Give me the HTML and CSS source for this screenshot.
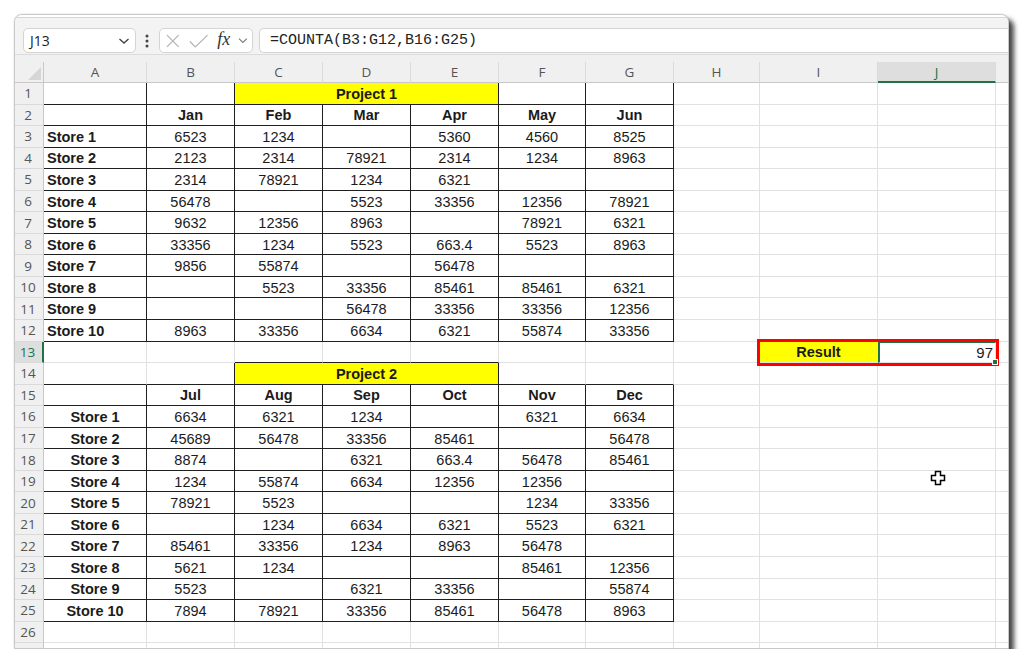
FILE: index.html
```html
<!DOCTYPE html>
<html lang="en">

<head>
  <meta charset="UTF-8">
  <title>Store Sales - COUNTA</title>
  <link rel="stylesheet" href="styles.css">
</head>

<body>
  <div class="page">
    <div class="window">
      <div class="top-strip"></div>

      <div class="formula-bar">
        <div class="name-box">
          <span>J13</span>
          <svg class="chev" width="12" height="8" viewBox="0 0 12 8">
            <path d="M1.5 2 L6 6 L10.5 2" fill="none" stroke="#444" stroke-width="1.4" />
          </svg>
        </div>
        <svg class="more" width="6" height="16" viewBox="0 0 6 16">
          <circle cx="3" cy="3" r="1.5" fill="#444" />
          <circle cx="3" cy="8" r="1.5" fill="#444" />
          <circle cx="3" cy="13" r="1.5" fill="#444" />
        </svg>
        <div class="fx-box">
          <svg width="16" height="16" viewBox="0 0 16 16">
            <path d="M2 2 L14 14 M14 2 L2 14" stroke="#b4b4b4" stroke-width="1.3" fill="none" />
          </svg>
          <svg width="20" height="16" viewBox="0 0 20 16">
            <path d="M1 8.5 L6.5 14 L19 2" stroke="#b4b4b4" stroke-width="1.3" fill="none" />
          </svg>
          <span class="fx">fx</span>
          <svg width="10" height="7" viewBox="0 0 10 7">
            <path d="M1 1.5 L5 5.5 L9 1.5" fill="none" stroke="#777" stroke-width="1.1" />
          </svg>
        </div>
        <div class="formula">=COUNTA(B3:G12,B16:G25)</div>
      </div>

      <div class="sheet-wrap">
        <div class="sheet" id="sheet"></div>
      </div>

      <svg class="cursor" width="16" height="16" viewBox="0 0 16 16">
        <path d="M5.5 1.5h5v4h4v5h-4v4h-5v-4h-4v-5h4z" fill="#fff" stroke="#000" stroke-width="1.5" />
      </svg>
    </div>
  </div>

  <script>
    var sheet = document.getElementById("sheet");
    var letters = ["A", "B", "C", "D", "E", "F", "G", "H", "I", "J"];

    var months1 = ["Jan", "Feb", "Mar", "Apr", "May", "Jun"];
    var months2 = ["Jul", "Aug", "Sep", "Oct", "Nov", "Dec"];

    var project1 = [
      ["Store 1", 6523, 1234, "", 5360, 4560, 8525],
      ["Store 2", 2123, 2314, 78921, 2314, 1234, 8963],
      ["Store 3", 2314, 78921, 1234, 6321, "", ""],
      ["Store 4", 56478, "", 5523, 33356, 12356, 78921],
      ["Store 5", 9632, 12356, 8963, "", 78921, 6321],
      ["Store 6", 33356, 1234, 5523, 663.4, 5523, 8963],
      ["Store 7", 9856, 55874, "", 56478, "", ""],
      ["Store 8", "", 5523, 33356, 85461, 85461, 6321],
      ["Store 9", "", "", 56478, 33356, 33356, 12356],
      ["Store 10", 8963, 33356, 6634, 6321, 55874, 33356]
    ];

    var project2 = [
      ["Store 1", 6634, 6321, 1234, "", 6321, 6634],
      ["Store 2", 45689, 56478, 33356, 85461, "", 56478],
      ["Store 3", 8874, "", 6321, 663.4, 56478, 85461],
      ["Store 4", 1234, 55874, 6634, 12356, 12356, ""],
      ["Store 5", 78921, 5523, "", "", 1234, 33356],
      ["Store 6", "", 1234, 6634, 6321, 5523, 6321],
      ["Store 7", 85461, 33356, 1234, 8963, 56478, ""],
      ["Store 8", 5621, 1234, "", "", 85461, 12356],
      ["Store 9", 5523, "", 6321, 33356, "", 55874],
      ["Store 10", 7894, 78921, 33356, 85461, 56478, 8963]
    ];

    function add(cls, text) {
      var d = document.createElement("div");
      d.className = cls;
      if (text !== undefined && text !== "") d.textContent = text;
      sheet.appendChild(d);
      return d;
    }

    function cell(cls, text) {
      return add("cell " + (cls || ""), text);
    }

    // empty H, I, J and the sliver after J
    function blankRight() {
      cell(); cell(); cell(); cell("edge");
    }

    // column headers
    add("corner");
    letters.forEach(function (l) {
      add("col-head" + (l === "J" ? " active" : ""), l);
    });
    add("col-head edge");

    for (var r = 1; r <= 27; r++) {
      add("row-head" + (r === 13 ? " active" : ""), r);

      if (r === 1 || r === 14) {
        var first = r === 1;
        cell(first ? "bd" : "bb");
        cell("bd");
        cell("bd yellow bold c span3", first ? "Project 1" : "Project 2");
        cell(first ? "bd" : "bb");
        cell(first ? "bd" : "bb");
        blankRight();
      } else if (r === 2 || r === 15) {
        cell("bd");
        (r === 2 ? months1 : months2).forEach(function (m) {
          cell("bd bold c", m);
        });
        blankRight();
      } else if ((r >= 3 && r <= 12) || (r >= 16 && r <= 25)) {
        var row = r <= 12 ? project1[r - 3] : project2[r - 16];
        cell("bd bold " + (r <= 12 ? "l" : "c"), row[0]);
        for (var i = 1; i < row.length; i++) {
          cell("bd c", row[i]);
        }
        blankRight();
      } else if (r === 13) {
        cell(); cell();
        cell("bb"); cell("bb"); cell("bb");
        cell(); cell(); cell();
        var result = add("result");
        var label = document.createElement("div");
        label.className = "cell yellow bold c";
        label.textContent = "Result";
        var value = document.createElement("div");
        value.className = "cell r selected";
        value.textContent = "97";
        result.appendChild(label);
        result.appendChild(value);
        cell("edge");
      } else {
        for (var c = 0; c < 7; c++) cell();
        blankRight();
      }
    }
  </script>
</body>

</html>
```

FILE: styles.css
```css
body {
  margin: 0;
  background-color: #fff;
  font-family: "Liberation Sans", Arial, sans-serif;
}

.page {
  padding: 14px 0 0 14px;
}

.window {
  position: relative;
  width: 993px;
  height: 633px;
  border: 1px solid #c9c9c9;
  border-radius: 8px 8px 0 0;
  background-color: #f3f3f3;
  box-shadow: 5px 5px 5px rgba(0, 0, 0, 0.72), 0 0 2px rgba(0, 0, 0, 0.15);
  overflow: hidden;
}

.top-strip {
  height: 2px;
  background-color: #fff;
  border-bottom: 1px solid #d6d6d6;
}

/* formula bar */

.formula-bar {
  display: flex;
  align-items: center;
  height: 37px;
  padding-left: 8px;
  background-color: #f3f3f3;
  border-bottom: 1px solid #dcdcdc;
  box-sizing: border-box;
  padding-top: 10px;
  padding-bottom: 1px;
}

.name-box {
  display: flex;
  align-items: center;
  justify-content: space-between;
  width: 113px;
  height: 25px;
  box-sizing: border-box;
  padding: 0 5px 0 6px;
  background-color: #fff;
  border: 1px solid #d4d4d4;
  border-radius: 5px;
  font-family: "Open Sans", sans-serif;
  font-size: 14px;
  color: #222;
}

.more {
  margin: 0 9px 0 8px;
}

.fx-box {
  display: flex;
  align-items: center;
  gap: 8px;
  width: 94px;
  height: 25px;
  box-sizing: border-box;
  padding: 0 4px 0 5px;
  background-color: #fff;
  border: 1px solid #d4d4d4;
  border-radius: 5px;
}

.fx {
  font-family: "Liberation Serif", serif;
  font-style: italic;
  font-size: 18px;
  color: #333;
  margin-left: 1px;
  margin-top: -2px;
}

.formula {
  flex: 1;
  height: 25px;
  margin-left: 6px;
  box-sizing: border-box;
  padding-left: 10px;
  background-color: #fff;
  border: 1px solid #d4d4d4;
  border-right: none;
  border-radius: 5px 0 0 5px;
  font-family: "Liberation Mono", monospace;
  font-size: 15px;
  line-height: 23px;
  color: #222;
}

/* grid */

.sheet-wrap {
  padding-top: 7px;
  background-color: #f0f0f0;
}

.sheet {
  display: grid;
  grid-template-columns: 29px 103px 88px 88px 88px 88px 87px 88px 86px 118px 118px 1fr;
  grid-template-rows: 21px repeat(27, 21.56px);
  background-color: #fff;
}

.corner,
.col-head,
.row-head {
  display: flex;
  align-items: center;
  justify-content: center;
  box-sizing: border-box;
  background-color: #f0f0f0;
  font-family: "Open Sans", sans-serif;
  font-size: 13.5px;
  color: #555;
}

.corner {
  position: relative;
  border-right: 1px solid #c8c8c8;
  border-bottom: 1px solid #c8c8c8;
}

.corner::after {
  content: "";
  position: absolute;
  right: 2px;
  bottom: 2px;
  border-left: 13px solid transparent;
  border-bottom: 13px solid #d6d6d6;
}

.col-head {
  border-right: 1px solid #dadada;
  border-bottom: 1px solid #c8c8c8;
}

.col-head.active {
  background-color: #dedede;
  border-bottom: 2px solid #217346;
  color: #217346;
}

.col-head.edge {
  border-right: none;
}

.row-head {
  border-right: 1px solid #c8c8c8;
  border-bottom: 1px solid #dadada;
  padding-right: 2px;
}

.row-head.active {
  background-color: #dedede;
  border-right: 2px solid #217346;
  color: #217346;
}

.cell {
  display: flex;
  align-items: center;
  box-sizing: border-box;
  padding: 1px 3px 0;
  border-right: 1px solid #e1e1e1;
  border-bottom: 1px solid #e1e1e1;
  background-color: #fff;
  font-size: 14.5px;
  color: #1b1b1b;
  white-space: nowrap;
}

.cell.edge {
  border-right: none;
}

.cell.bd {
  border-right-color: #1f1f1f;
  border-bottom-color: #1f1f1f;
}

.cell.bb {
  border-bottom-color: #1f1f1f;
}

.c {
  justify-content: center;
}

.l {
  justify-content: flex-start;
}

.r {
  justify-content: flex-end;
}

.bold {
  font-weight: bold;
}

.yellow {
  background-color: #ffff00;
}

.span3 {
  grid-column: span 3;
}

/* I13:J13 result block */

.result {
  position: relative;
  z-index: 2;
  grid-column: span 2;
  display: grid;
  grid-template-columns: 118px 118px;
  outline: 3px solid #ff0000;
}

.result .cell {
  border-bottom-color: #e1e1e1;
}

.selected {
  position: relative;
  border-left: 2px solid #217346;
  border-top: 1px solid #217346;
  padding-right: 2px;
  font-size: 15px;
}

.selected::after {
  content: "";
  position: absolute;
  right: -3px;
  bottom: -3px;
  width: 4px;
  height: 4px;
  background-color: #217346;
  border: 1px solid #fff;
}

.cursor {
  position: absolute;
  left: 915px;
  top: 455px;
}
```
